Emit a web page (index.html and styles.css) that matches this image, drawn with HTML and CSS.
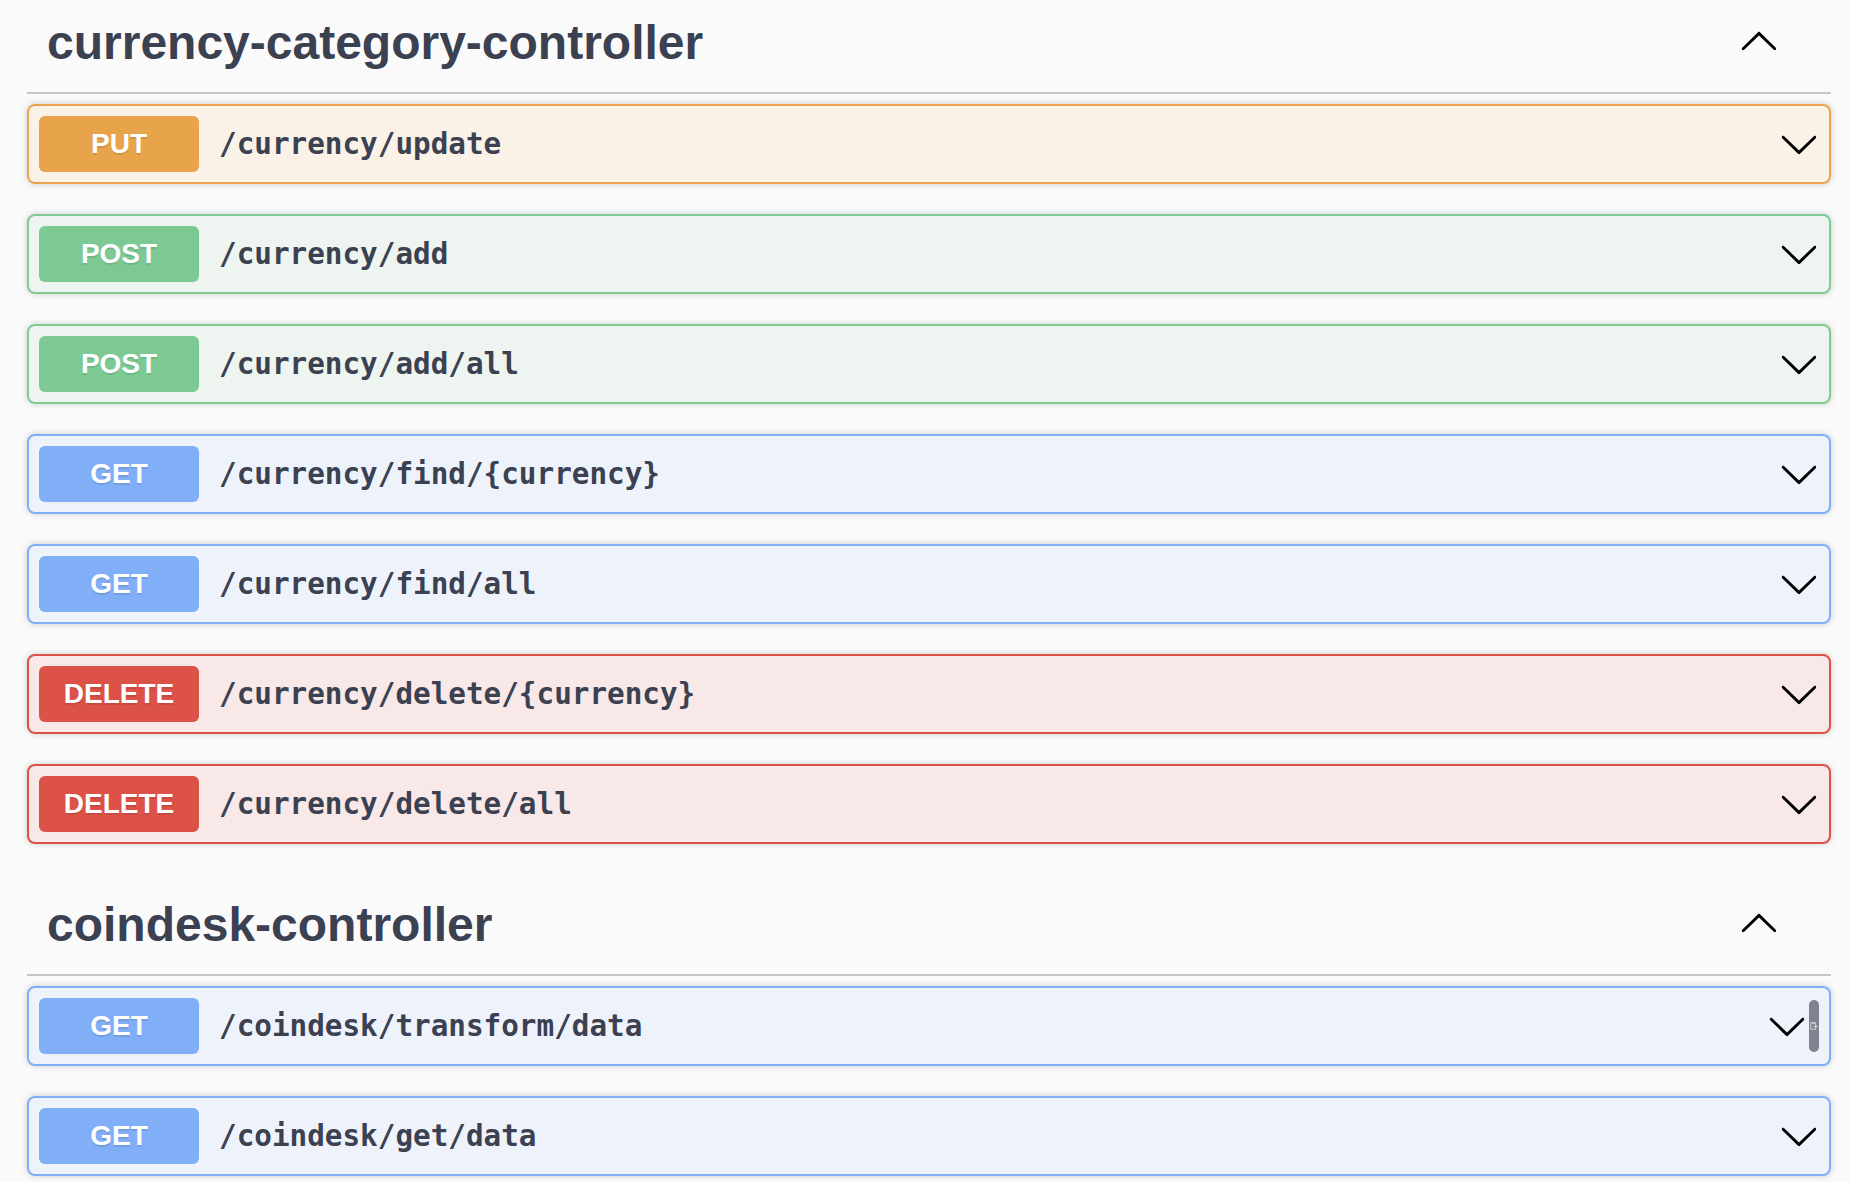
FILE: index.html
```html
<!DOCTYPE html>
<html>
<head>
<meta charset="utf-8">
<link rel="stylesheet" href="styles.css">
</head>
<body>
<div class="wrapper">
  <section class="tag-section first">
    <h3 class="tag">
      <span class="tag-title">currency-category-controller</span>
      <button class="expand"><svg class="arrow" viewBox="0 0 20 20"><path transform="rotate(180 10 10)" d="M17.418 6.109c.272-.268.709-.268.979 0s.271.701 0 .969l-7.908 7.83c-.27.268-.707.268-.979 0l-7.908-7.83c-.27-.268-.27-.701 0-.969.271-.268.709-.268.979 0L10 13.25l7.418-7.141z"/></svg></button>
    </h3>
    <div class="ops">
      <div class="opblock put"><div class="summary"><span class="method">PUT</span><span class="path">/currency/update</span><svg class="arrow" viewBox="0 0 20 20"><path d="M17.418 6.109c.272-.268.709-.268.979 0s.271.701 0 .969l-7.908 7.830c-.27.268-.707.268-.979 0l-7.908-7.830c-.27-.268-.27-.701 0-.969.271-.268.709-.268.979 0L10 13.250l7.418-7.141z"/></svg></div></div>
      <div class="opblock post"><div class="summary"><span class="method">POST</span><span class="path">/currency/add</span><svg class="arrow" viewBox="0 0 20 20"><path d="M17.418 6.109c.272-.268.709-.268.979 0s.271.701 0 .969l-7.908 7.830c-.27.268-.707.268-.979 0l-7.908-7.830c-.27-.268-.27-.701 0-.969.271-.268.709-.268.979 0L10 13.250l7.418-7.141z"/></svg></div></div>
      <div class="opblock post"><div class="summary"><span class="method">POST</span><span class="path">/currency/add/all</span><svg class="arrow" viewBox="0 0 20 20"><path d="M17.418 6.109c.272-.268.709-.268.979 0s.271.701 0 .969l-7.908 7.830c-.27.268-.707.268-.979 0l-7.908-7.830c-.27-.268-.27-.701 0-.969.271-.268.709-.268.979 0L10 13.250l7.418-7.141z"/></svg></div></div>
      <div class="opblock get"><div class="summary"><span class="method">GET</span><span class="path">/currency/find/{currency}</span><svg class="arrow" viewBox="0 0 20 20"><path d="M17.418 6.109c.272-.268.709-.268.979 0s.271.701 0 .969l-7.908 7.830c-.27.268-.707.268-.979 0l-7.908-7.830c-.27-.268-.27-.701 0-.969.271-.268.709-.268.979 0L10 13.250l7.418-7.141z"/></svg></div></div>
      <div class="opblock get"><div class="summary"><span class="method">GET</span><span class="path">/currency/find/all</span><svg class="arrow" viewBox="0 0 20 20"><path d="M17.418 6.109c.272-.268.709-.268.979 0s.271.701 0 .969l-7.908 7.830c-.27.268-.707.268-.979 0l-7.908-7.830c-.27-.268-.27-.701 0-.969.271-.268.709-.268.979 0L10 13.250l7.418-7.141z"/></svg></div></div>
      <div class="opblock delete"><div class="summary"><span class="method">DELETE</span><span class="path">/currency/delete/{currency}</span><svg class="arrow" viewBox="0 0 20 20"><path d="M17.418 6.109c.272-.268.709-.268.979 0s.271.701 0 .969l-7.908 7.830c-.27.268-.707.268-.979 0l-7.908-7.830c-.27-.268-.27-.701 0-.969.271-.268.709-.268.979 0L10 13.250l7.418-7.141z"/></svg></div></div>
      <div class="opblock delete"><div class="summary"><span class="method">DELETE</span><span class="path">/currency/delete/all</span><svg class="arrow" viewBox="0 0 20 20"><path d="M17.418 6.109c.272-.268.709-.268.979 0s.271.701 0 .969l-7.908 7.830c-.27.268-.707.268-.979 0l-7.908-7.830c-.27-.268-.27-.701 0-.969.271-.268.709-.268.979 0L10 13.250l7.418-7.141z"/></svg></div></div>
    </div>
  </section>
  <section class="tag-section">
    <h3 class="tag">
      <span class="tag-title">coindesk-controller</span>
      <button class="expand"><svg class="arrow" viewBox="0 0 20 20"><path transform="rotate(180 10 10)" d="M17.418 6.109c.272-.268.709-.268.979 0s.271.701 0 .969l-7.908 7.83c-.27.268-.707.268-.979 0l-7.908-7.83c-.27-.268-.27-.701 0-.969.271-.268.709-.268.979 0L10 13.25l7.418-7.141z"/></svg></button>
    </h3>
    <div class="ops">
      <div class="opblock get"><div class="summary"><span class="method">GET</span><span class="path">/coindesk/transform/data</span><svg class="arrow" viewBox="0 0 20 20"><path d="M17.418 6.109c.272-.268.709-.268.979 0s.271.701 0 .969l-7.908 7.830c-.27.268-.707.268-.979 0l-7.908-7.830c-.27-.268-.27-.701 0-.969.271-.268.709-.268.979 0L10 13.250l7.418-7.141z"/></svg><span class="copy"><svg class="copy-icon" viewBox="0 0 10 12"><rect x="1" y="2" width="6" height="8" fill="none" stroke="#d8d9de" stroke-width="1"/><rect x="2.5" y="1" width="3" height="2" fill="#d8d9de"/><path d="M4 6.5h5M7.5 5l1.5 1.5-1.5 1.5" fill="none" stroke="#d8d9de" stroke-width="1"/></svg></span></div></div>
      <div class="opblock get"><div class="summary"><span class="method">GET</span><span class="path">/coindesk/get/data</span><svg class="arrow" viewBox="0 0 20 20"><path d="M17.418 6.109c.272-.268.709-.268.979 0s.271.701 0 .969l-7.908 7.830c-.27.268-.707.268-.979 0l-7.908-7.830c-.27-.268-.27-.701 0-.969.271-.268.709-.268.979 0L10 13.250l7.418-7.141z"/></svg></div></div>
    </div>
  </section>
</div>
</body>
</html>
```

FILE: styles.css
```css
html, body {
  margin: 0;
  padding: 0;
  background: #fafafa;
  font-family: "Liberation Sans", Arial, sans-serif;
}

.wrapper {
  padding: 0 19px 0 27px;
}

.tag-section.first {
  margin-top: -8px;
}

.tag {
  display: flex;
  align-items: center;
  height: 60px;
  margin: 0 0 10px;
  padding: 20px 40px 20px 20px;
  border-bottom: 2px solid #c5c6cb;
  font-size: 48px;
  font-weight: 700;
  color: #3b4151;
}

.tag-title {
  flex: 1;
}

.expand {
  display: flex;
  width: 40px;
  height: 40px;
  margin: 0 12px 0 0;
  padding: 0;
  border: 0;
  background: none;
}

.arrow {
  flex: none;
  width: 40px;
  height: 40px;
  fill: #000;
}

.opblock {
  margin: 0 0 30px;
  border: 2px solid;
  border-radius: 8px;
  box-shadow: 0 0 6px rgba(0, 0, 0, 0.19);
}

.summary {
  display: flex;
  align-items: center;
  padding: 10px;
}

.method {
  flex: none;
  width: 160px;
  padding: 12px 0;
  font-size: 28px;
  line-height: 32px;
  font-weight: 700;
  text-align: center;
  color: #fff;
  border-radius: 6px;
  text-shadow: 0 2px 0 rgba(0, 0, 0, 0.1);
}

.path {
  flex: 1;
  padding: 0 20px;
  font-family: "DejaVu Sans Mono", "Liberation Mono", monospace;
  font-size: 29.3px;
  font-weight: 700;
  color: #3b4151;
}

.put { border-color: #e9a44d; background: #faf1e7; }
.put .method { background: #e8a44b; }

.post { border-color: #7ecb95; background: #eef5f0; }
.post .method { background: #7cc994; }

.get { border-color: #80aef7; background: #eef3fb; }
.get .method { background: #80aef7; }

.delete { border-color: #dc5249; background: #f8e8e7; }
.delete .method { background: #dc5148; }

.copy {
  flex: none;
  display: flex;
  align-items: center;
  justify-content: center;
  width: 10px;
  height: 52px;
  margin-left: 2px;
  border-radius: 5px;
  background: #7f828f;
}

.copy-icon {
  width: 8px;
  height: 10px;
}
```
